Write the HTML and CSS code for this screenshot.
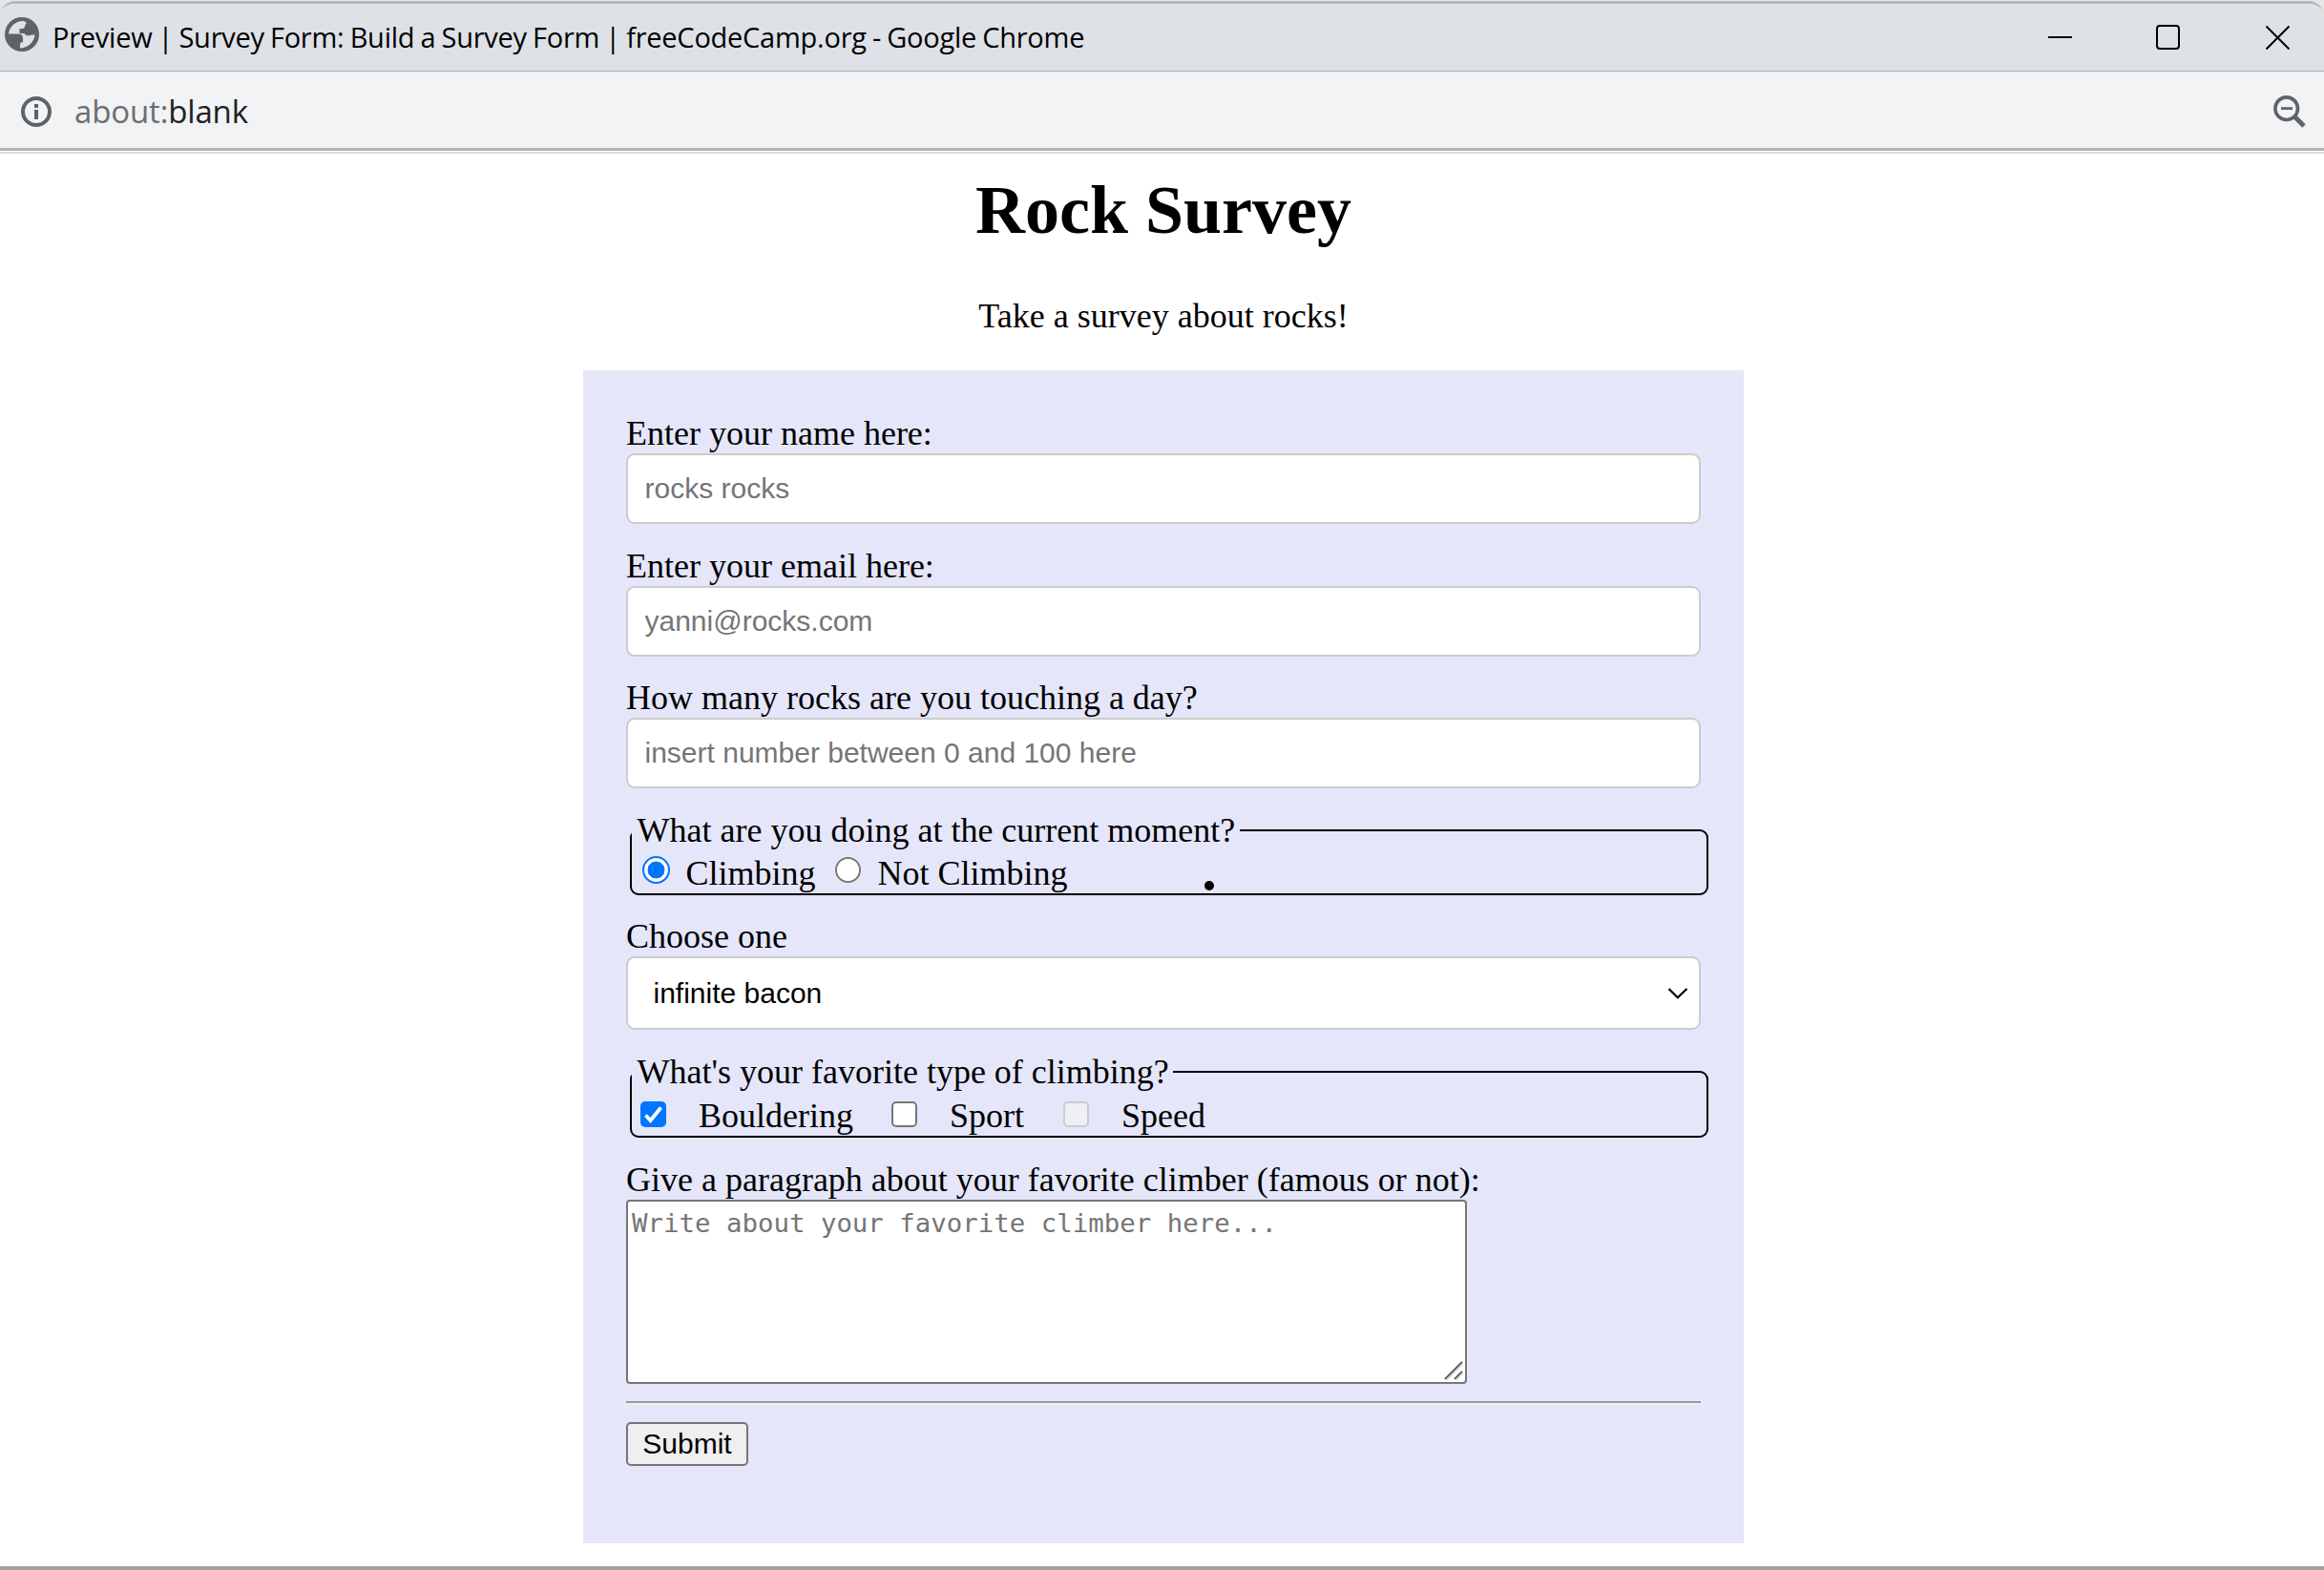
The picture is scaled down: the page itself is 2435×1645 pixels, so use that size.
FILE: index.html
```html
<!DOCTYPE html>
<html lang="en">
<head>
<meta charset="utf-8">
<title>Survey Form</title>
<link rel="stylesheet" href="styles.css">
</head>
<body>
<div class="window">
  <header class="titlebar">
    <svg class="globe" viewBox="0 0 36 36"><circle cx="18" cy="18" r="18" fill="#5f6368"/><path d="M20 4C12 3.500 5 9 4 17.500h10.500c3 0 4.500 1.500 4.500 4.500v4c-1.500 0-3 1-3 3v3.500c8-.2 15-6.500 15.500-14h-4c-1.500 1.500-6 1-7-1.500h-5v-5h3.500c2.500 0 1.500-4 4-6z" fill="#dee1e6"/></svg>
    <span class="title">Preview | Survey Form: Build a Survey Form | freeCodeCamp.org - Google Chrome</span>
    <div class="controls">
      <svg class="ctl" viewBox="0 0 26 26"><path d="M0 13h25" stroke="#000" stroke-width="2"/></svg>
      <svg class="ctl" viewBox="0 0 26 26"><rect x="1" y="1" width="23" height="24" rx="3" fill="none" stroke="#000" stroke-width="2"/></svg>
      <svg class="ctl close" viewBox="0 0 26 26"><path d="M.5 1.500l24 24M24.500 1.500l-24 24" stroke="#000" stroke-width="2"/></svg>
    </div>
  </header>
  <div class="toolbar">
    <svg class="info" viewBox="0 0 32 32"><circle cx="16" cy="16" r="14" fill="none" stroke="#5f6368" stroke-width="4"/><path d="M16 14v10M16 8v4" stroke="#5f6368" stroke-width="4"/></svg>
    <span class="url"><span class="scheme">about:</span>blank</span>
    <svg class="lens" viewBox="0 0 34 34"><circle cx="13.700" cy="13.700" r="11.800" fill="none" stroke="#5f6368" stroke-width="3.600"/><path d="M8 13.700h12" stroke="#5f6368" stroke-width="2.800"/><path d="M22.500 22.500l9.500 9.500" stroke="#5f6368" stroke-width="4.800"/></svg>
  </div>
  <main class="page">
    <h1 class="heading">Rock Survey</h1>
    <p class="lead">Take a survey about rocks!</p>
    <form class="survey">
      <label class="label" for="name">Enter your name here:</label>
      <input class="text-input" id="name" type="text" placeholder="rocks rocks">
      <label class="label spaced" for="email">Enter your email here:</label>
      <input class="text-input" id="email" type="email" placeholder="yanni@rocks.com">
      <label class="label spaced tight" for="count">How many rocks are you touching a day?</label>
      <input class="text-input" id="count" type="text" placeholder="insert number between 0 and 100 here">

      <fieldset class="group">
        <legend class="legend">What are you doing at the current moment?</legend>
        <div class="options">
          <label class="option radio-option"><input class="radio" type="radio" name="now" checked>Climbing</label>
          <label class="option radio-option"><input class="radio" type="radio" name="now">Not Climbing</label>
        </div>
        <span class="dot"></span>
      </fieldset>

      <label class="label spaced tight" for="choice">Choose one</label>
      <div class="select-wrap">
        <select class="select" id="choice"><option>infinite bacon</option></select>
        <svg class="chevron" viewBox="0 0 22 14"><path d="M1.500 2l9.300 9.300L20.500 2" fill="none" stroke="#000" stroke-width="2.200"/></svg>
      </div>

      <fieldset class="group types">
        <legend class="legend">What's your favorite type of climbing?</legend>
        <div class="options">
          <label class="option check-option first"><span class="box checked"><svg class="tick" viewBox="0 0 27 27"><path d="M5.500 14.500l5 5.500L21.500 6.500" fill="none" stroke="#fff" stroke-width="3.800"/></svg></span>Bouldering</label>
          <label class="option check-option second"><span class="box"></span>Sport</label>
          <label class="option check-option"><span class="box disabled"></span>Speed</label>
        </div>
      </fieldset>

      <label class="label spaced" for="about">Give a paragraph about your favorite climber (famous or not):</label>
      <div class="area-wrap">
        <textarea class="area" id="about" placeholder="Write about your favorite climber here..."></textarea>
        <svg class="grip" viewBox="0 0 20 20"><path d="M1 19L19 1M11 19l8-8" stroke="#5f6060" stroke-width="2"/><path d="M3 20L20 3M13 20l7-7" stroke="#c9c9c9" stroke-width="1"/></svg>
      </div>
      <div class="rule"></div>
      <button class="submit" type="button">Submit</button>
    </form>
  </main>
</div>
</body>
</html>
```
FILE: styles.css
```css
* { box-sizing: border-box; }

body {
  margin: 0;
  background: #e6e6e6;
  color: #000;
  font-family: "Liberation Serif", "Times New Roman", serif;
  font-size: 36px;
  line-height: 42px;
}

.window {
  display: flex;
  flex-direction: column;
  height: 1644px;
  margin-top: 1px;
  overflow: hidden;
  background: #fff;
  border-top: 3px solid #b5b8b8;
  border-bottom: 4px solid #a2a2a2;
  border-radius: 16px 16px 0 0;
}

.titlebar {
  display: flex;
  align-items: center;
  flex: none;
  height: 71px;
  padding: 0 35px 0 5px;
  background: #dee1e6;
  border-bottom: 1px solid #abaeb2;
  font-family: "Open Sans", "Noto Sans", sans-serif;
}

.globe { width: 36px; height: 36px; margin-top: -6px; }

.title {
  margin: -1px 0 0 14px;
  font-size: 29px;
  letter-spacing: -0.250px;
  word-spacing: -1.100px;
  white-space: nowrap;
}

.controls { display: flex; gap: 87px; margin-left: auto; }
.ctl { width: 26px; height: 26px; }
.close { margin-left: 2px; }

.toolbar {
  display: flex;
  align-items: center;
  flex: none;
  height: 83px;
  padding: 0 19px 0 22px;
  background: #f1f3f4;
  border-bottom: 3px solid #b0b3b2;
  font-family: "Open Sans", "Noto Sans", sans-serif;
}

.info { width: 32px; height: 32px; margin-top: 4px; }
.url {
  margin: 3px 0 0 24px;
  font-size: 33px;
  letter-spacing: -0.150px;
  color: #202124;
}
.scheme { color: #6b6e72; }
.lens { width: 34px; height: 34px; margin-left: auto; margin-top: 4px; }

.page {
  display: flex;
  flex-direction: column;
  align-items: center;
  flex: 1;
  margin-top: 1px;
  padding: 18px 0 0 3px;
  border-top: 2px solid #dcdcdc;
}

.heading { margin: 0; font-size: 72px; line-height: 82px; }
.lead { margin: 49px 0 36px; }

.survey {
  display: flex;
  flex-direction: column;
  align-items: flex-start;
  width: 1216px;
  height: 1229px;
  padding: 45px;
  background: #e5e6fa;
}

.label { display: block; }
.spaced { margin-top: 23px; }
.tight { margin-top: 22px; }

.text-input,
.select {
  width: 1126px;
  border: 2px solid #ccc;
  border-radius: 9px;
  background: #fff;
  color: #000;
  font: 30px "Liberation Sans", Arial, sans-serif;
}

.text-input { height: 74px; padding: 0 17.500px; }
.text-input::placeholder,
.area::placeholder { color: #757575; opacity: 1; }

.select {
  height: 77px;
  padding: 0 26.500px;
  appearance: none;
}

.select-wrap, .area-wrap { position: relative; display: flex; }
.chevron { position: absolute; right: 13px; top: 32px; width: 22px; height: 14px; }

.group {
  position: relative;
  width: 1130px;
  height: 89px;
  margin: 23px 0 0 4px;
  padding: 3px 0 0;
  border: 2px solid #000;
  border-radius: 9px;
}

.types { height: 90px; padding-top: 4px; }
.legend { padding: 0 4.500px 0 5.500px; }
.options { display: flex; }
.option { display: flex; white-space: nowrap; }
.radio-option { gap: 16.500px; width: 201px; padding-left: 11px; }

.radio {
  appearance: none;
  flex: none;
  width: 29px;
  height: 29px;
  margin: 3px 0 0;
  border: 1px solid transparent;
  border-radius: 50%;
  background: radial-gradient(circle, #fff 11.300px, #767676 11.800px) padding-box;
}

.radio:checked {
  border: 2px solid #0075ff;
  background: radial-gradient(circle, #0075ff 8.700px, #fff 9.200px);
}

.dot {
  position: absolute;
  left: 600px;
  bottom: 3px;
  width: 10px;
  height: 10px;
  border-radius: 50%;
  background: #000;
}

.check-option { gap: 34px; padding-left: 9px; }
.first { width: 263px; }
.second { width: 180px; }

.box {
  flex: none;
  width: 27px;
  height: 27px;
  margin-top: 6px;
  border: 2px solid #767676;
  border-radius: 5px;
  background: #fff;
}

.checked { border: 0; background: #0075ff; }
.tick { display: block; width: 27px; height: 27px; }
.disabled { border-color: #cbcbd2; background: #eff0f6; }

.area {
  width: 881px;
  height: 193px;
  padding: 5px 4px 4px;
  border: 2px solid #767676;
  border-radius: 4px;
  background: #fff;
  resize: none;
  font: 27.400px/36px "DejaVu Sans Mono", monospace;
}

.grip { position: absolute; right: 4px; bottom: 4px; width: 20px; height: 20px; }

.rule {
  width: 1126px;
  height: 4px;
  margin: 18px 0;
  border-top: 2px solid #9a9a9a;
  border-bottom: 2px solid #eee;
}

.submit {
  width: 128px;
  height: 46px;
  padding: 0;
  border: 2px solid #767676;
  border-radius: 5px;
  background: #efefef;
  color: #000;
  font: 30px "Liberation Sans", Arial, sans-serif;
}
```
